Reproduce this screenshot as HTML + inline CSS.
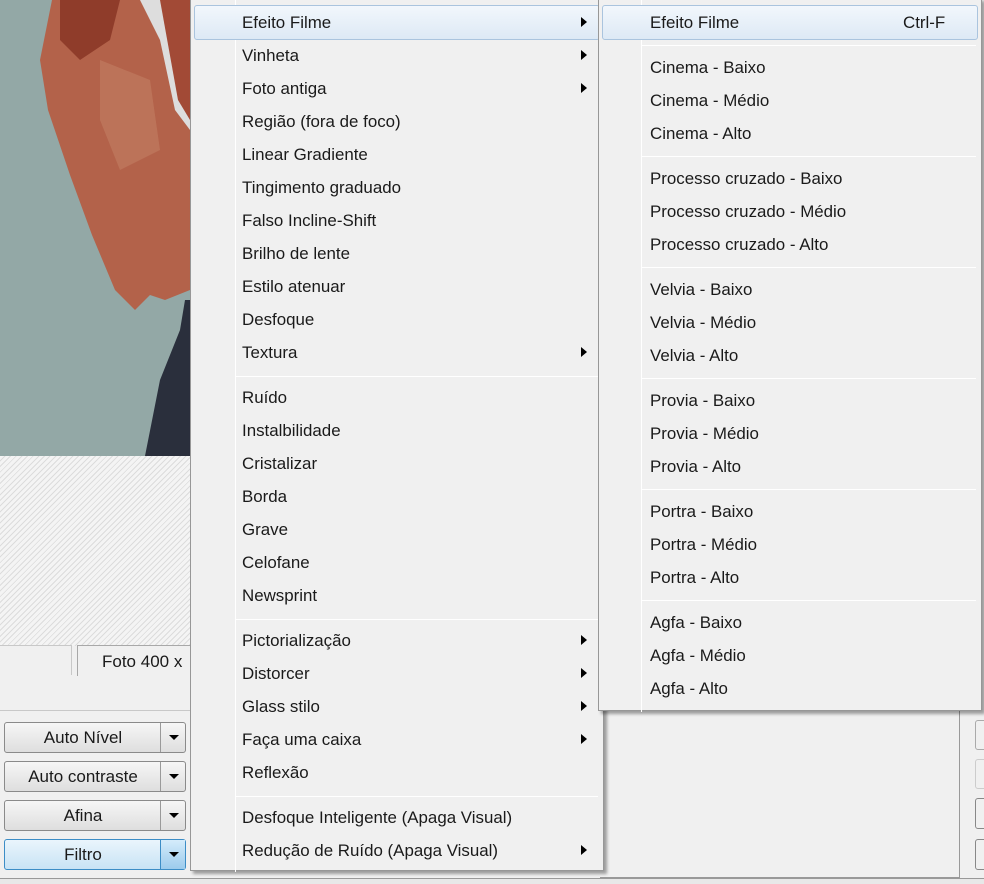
<!DOCTYPE html>
<html><head><meta charset="utf-8"><style>
*{margin:0;padding:0;box-sizing:border-box}
body{width:984px;height:884px;overflow:hidden;background:#f0f0f0;position:relative;font-family:"Liberation Sans",sans-serif;font-size:16.9px;color:#1a1a1a}
.abs{position:absolute}
.hatch{background:repeating-linear-gradient(135deg,#f4f4f4 0 3px,#dcdcdc 3px 4px)}
.menu{position:absolute;background:#f0f0f0;border:1px solid #979797;box-shadow:3px 3px 3px rgba(0,0,0,.35)}
.it{position:absolute;white-space:nowrap;line-height:20px}
.sep{position:absolute;height:1px;background:#dcdcdc;border-bottom:1px solid #fff}
.arr{position:absolute;width:0;height:0;border-top:5px solid transparent;border-bottom:5px solid transparent;border-left:6px solid #000}
.btn{position:absolute;left:4px;width:182px;height:31px;border:1px solid #8a8a8a;border-radius:3px;background:linear-gradient(#f6f6f6,#dedede);font-size:17px;text-align:center;line-height:29px}
.btn .t{position:absolute;left:0;width:156px;text-align:center}
.btn .d{position:absolute;right:0;top:0;width:25px;height:29px;border-left:1px solid #9a9a9a}
.btn .d:after{content:"";position:absolute;left:8px;top:12px;border-left:5px solid transparent;border-right:5px solid transparent;border-top:5px solid #000}
</style></head><body>
<!-- photo -->
<div class="abs" style="left:0;top:0;width:190px;height:456px;background:#93a8a6;overflow:hidden">
<svg width="190" height="456" style="position:absolute;left:0;top:0">
<path d="M52 0 L175 0 L190 60 L190 290 L165 300 L150 295 L135 310 L115 290 L92 235 L70 175 L48 110 L40 60 Z" fill="#b3624a"/>
<path d="M60 0 L120 0 L110 40 L80 60 L60 40 Z" fill="#8f3c2a"/>
<path d="M100 60 L150 80 L160 150 L120 170 L100 120 Z" fill="#c07a60" opacity=".7"/>
<path d="M140 0 L190 0 L190 130 L175 110 L160 40 Z" fill="#ddd"/>
<path d="M160 0 L190 0 L190 120 L178 100 Z" fill="#a24a36"/>
<path d="M185 300 L190 300 L190 456 L145 456 L160 380 L180 330 Z" fill="#2a2f3c"/>
</svg></div>
<div class="abs hatch" style="left:0;top:456px;width:190px;height:190px"></div>
<div class="abs" style="left:0;top:645px;width:72px;height:30px;border-top:1px solid #c8c8c8;border-right:1px solid #c8c8c8;background:#f0f0f0"></div>
<div class="abs" style="left:77px;top:645px;width:120px;height:31px;border-top:1px solid #a8a8a8;border-left:1px solid #a8a8a8;background:#f0f0f0;padding-left:24px;line-height:32px;font-size:17px">Foto 400 x</div>
<div class="abs" style="left:0;top:710px;width:190px;height:1px;background:#c8c8c8"></div>
<div class="btn" style="top:722px"><span class="t">Auto Nível</span><span class="d"></span></div>
<div class="btn" style="top:761px"><span class="t">Auto contraste</span><span class="d"></span></div>
<div class="btn" style="top:800px"><span class="t">Afina</span><span class="d"></span></div>
<div class="btn" style="top:839px;border-color:#3c8dc6;background:linear-gradient(#eaf5fc,#c8e3f5)"><span class="t">Filtro</span><span class="d" style="border-color:#3c8dc6;background:linear-gradient(#d5ecfb,#9ccbec)"></span></div>
<div class="abs" style="left:0;top:878px;width:984px;height:6px;border-top:1px solid #999;background:#e8e8e8"></div>
<!-- bottom right panel -->
<div class="abs" style="left:600px;top:700px;width:360px;height:178px;border-right:1px solid #999;border-bottom:1px solid #999;background:#f0f0f0"></div>
<div class="abs" style="left:975px;top:720px;width:12px;height:30px;border:1px solid #aaa;border-radius:3px"></div>
<div class="abs" style="left:975px;top:759px;width:12px;height:30px;border:1px solid #ccc;border-radius:3px"></div>
<div class="abs" style="left:975px;top:798px;width:12px;height:31px;border:1px solid #888;border-radius:3px"></div>
<div class="abs" style="left:975px;top:839px;width:12px;height:31px;border:1px solid #888;border-radius:3px"></div>

<!-- main menu -->
<div class="menu" style="left:190px;top:-2px;width:414px;height:873px">
<div class="abs" style="left:44px;top:0;width:1px;height:873px;background:#dcdcdc;border-right:1px solid #fff"></div>
<div class="abs" style="left:3px;top:6px;width:406px;height:35px;border:1px solid #aac4de;border-radius:3px;background:linear-gradient(#f2f7fc,#dde9f5)"></div>
</div>
<!-- submenu -->
<div class="menu" style="left:598px;top:-2px;width:384px;height:713px">
<div class="abs" style="left:42px;top:0;width:1px;height:713px;background:#dcdcdc;border-right:1px solid #fff"></div>
<div class="abs" style="left:3px;top:6px;width:376px;height:35px;border:1px solid #aac4de;border-radius:3px;background:linear-gradient(#f2f7fc,#dde9f5)"></div>
</div>

<div id="items"></div>
<script>
var m=[["Efeito Filme",22,1],["Vinheta",55,1],["Foto antiga",88,1],["Região (fora de foco)",121],["Linear Gradiente",154],["Tingimento graduado",187],["Falso Incline-Shift",220],["Brilho de lente",253],["Estilo atenuar",286],["Desfoque",319],["Textura",352,1],["-",376],["Ruído",397],["Instalbilidade",430],["Cristalizar",463],["Borda",496],["Grave",529],["Celofane",562],["Newsprint",595],["-",619],["Pictorialização",640,1],["Distorcer",673,1],["Glass stilo",706,1],["Faça uma caixa",739,1],["Reflexão",772],["-",796],["Desfoque Inteligente (Apaga Visual)",817],["Redução de Ruído (Apaga Visual)",850,1]];
var s=[["Efeito Filme",22],["-",45],["Cinema - Baixo",67],["Cinema - Médio",100],["Cinema - Alto",133],["-",156],["Processo cruzado - Baixo",178],["Processo cruzado - Médio",211],["Processo cruzado - Alto",244],["-",267],["Velvia - Baixo",289],["Velvia - Médio",322],["Velvia - Alto",355],["-",378],["Provia - Baixo",400],["Provia - Médio",433],["Provia - Alto",466],["-",489],["Portra - Baixo",511],["Portra - Médio",544],["Portra - Alto",577],["-",600],["Agfa - Baixo",622],["Agfa - Médio",655],["Agfa - Alto",688]];
var h="";
m.forEach(function(a){if(a[0]=="-")h+='<div class="sep" style="left:236px;top:'+a[1]+'px;width:362px"></div>';else{h+='<div class="it" style="left:242px;top:'+(a[1]-9)+'px">'+a[0]+'</div>';if(a[2])h+='<div class="arr" style="left:581px;top:'+(a[1]-5)+'px"></div>';}});
s.forEach(function(a){if(a[0]=="-")h+='<div class="sep" style="left:642px;top:'+a[1]+'px;width:334px"></div>';else h+='<div class="it" style="left:650px;top:'+(a[1]-9)+'px">'+a[0]+'</div>';});
h+='<div class="it" style="left:903px;top:13px">Ctrl-F</div>';
document.getElementById("items").innerHTML=h;
</script>
</body></html>
